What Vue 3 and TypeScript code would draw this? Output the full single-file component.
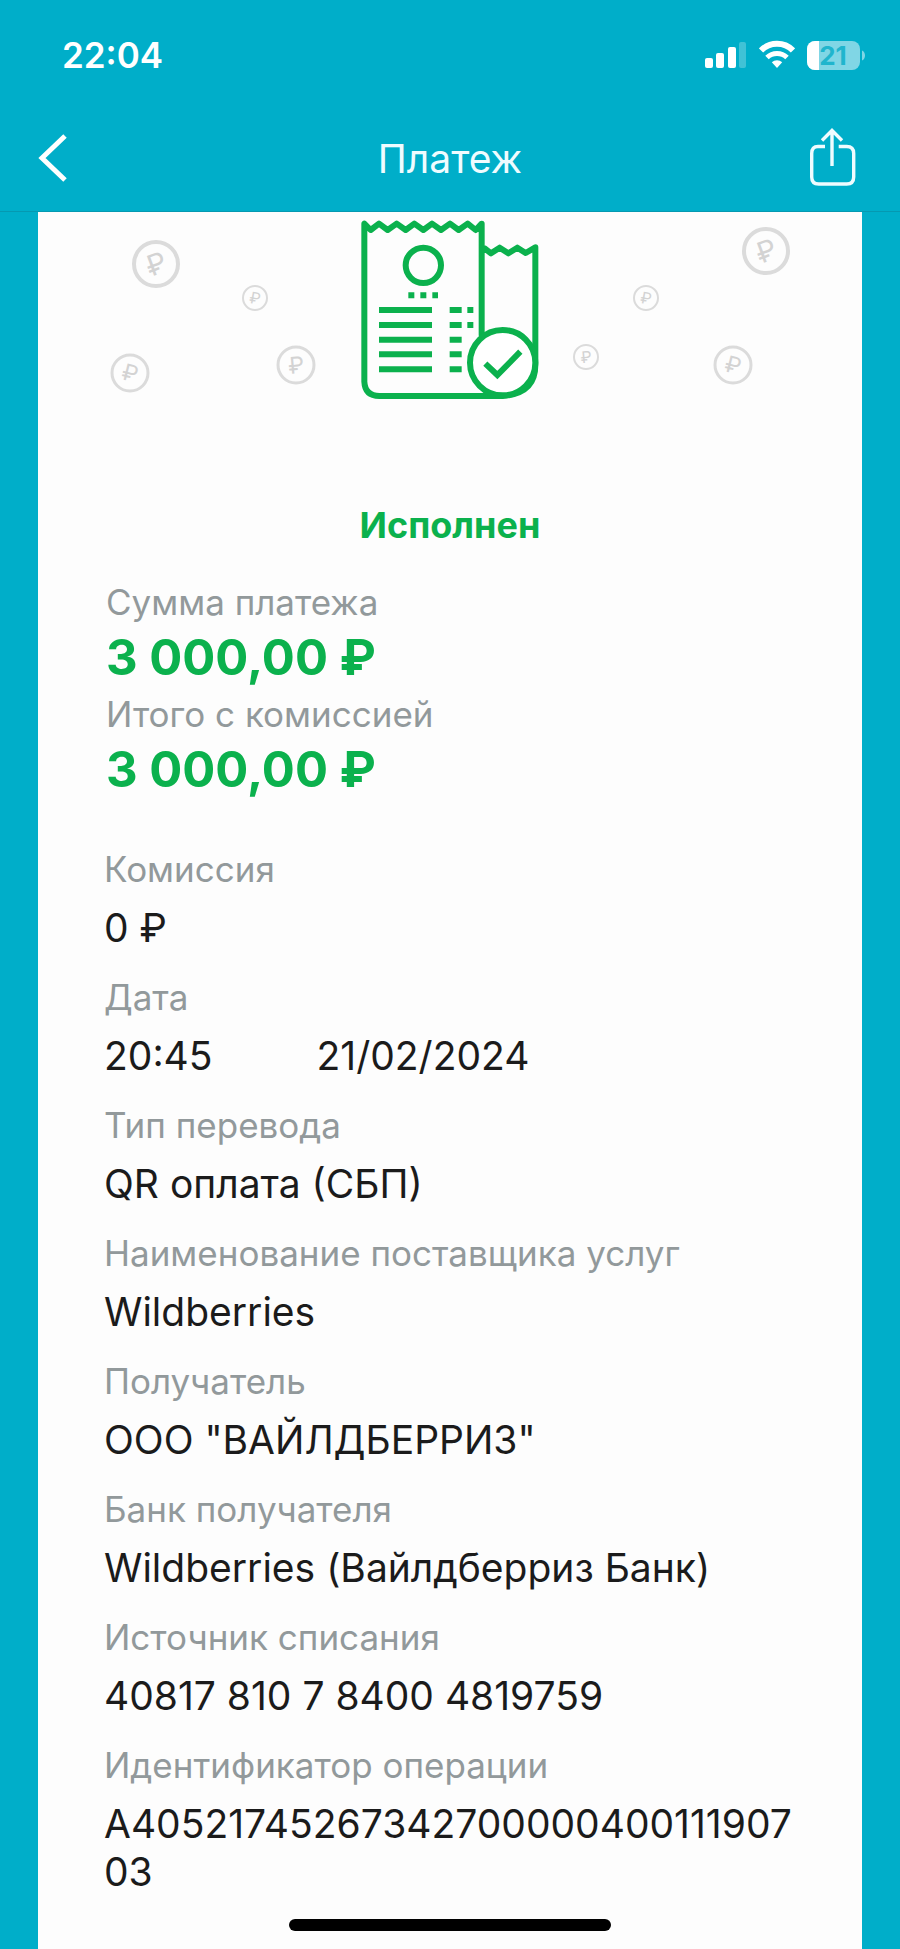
<script setup lang="ts">
interface Coin {
  x: number
  y: number
  r: number
  angle: number
  size: number
  stroke: number
}

interface Detail {
  label: string
  values: string[]
}

const coins: Coin[] = [
  { x: 156, y: 264, r: 22, angle: -20, size: 29, stroke: 4 },
  { x: 255, y: 298, r: 12, angle: 10, size: 16, stroke: 2 },
  { x: 130, y: 373, r: 18, angle: 14, size: 23, stroke: 3 },
  { x: 296, y: 365, r: 18, angle: -5, size: 23, stroke: 3 },
  { x: 766, y: 251, r: 22, angle: -20, size: 29, stroke: 4 },
  { x: 646, y: 298, r: 12, angle: 10, size: 16, stroke: 2 },
  { x: 586, y: 357, r: 12, angle: -5, size: 16, stroke: 2 },
  { x: 733, y: 365, r: 18, angle: 14, size: 23, stroke: 3 },
]

const sums = [
  { label: 'Сумма платежа', amount: '3 000,00 ₽' },
  { label: 'Итого с комиссией', amount: '3 000,00 ₽' },
]

const details: Detail[] = [
  { label: 'Комиссия', values: ['0 ₽'] },
  { label: 'Дата', values: ['20:45', '21/02/2024'] },
  { label: 'Тип перевода', values: ['QR оплата (СБП)'] },
  { label: 'Наименование поставщика услуг', values: ['Wildberries'] },
  { label: 'Получатель', values: ['ООО "ВАЙЛДБЕРРИЗ"'] },
  { label: 'Банк получателя', values: ['Wildberries (Вайлдберриз Банк)'] },
  { label: 'Источник списания', values: ['40817 810 7 8400 4819759'] },
  { label: 'Идентификатор операции', values: ['A4052174526734270000040011190703'] },
]
</script>

<template>
  <div class="screen">
    <div class="status-bar">
      <time class="clock">22:04</time>
      <div class="indicators">
        <svg width="42" height="30" viewBox="0 0 42 30" aria-hidden="true">
          <g fill="#fff">
            <rect x="0" y="18" width="8" height="10" rx="2" />
            <rect x="11" y="13" width="8" height="15" rx="2" />
            <rect x="23" y="7" width="8" height="21" rx="2" />
            <rect x="34" y="2" width="7" height="26" rx="2" opacity=".25" />
          </g>
        </svg>
        <svg width="36" height="30" viewBox="0 0 36 30" aria-hidden="true">
          <path d="M2 10.500a22.500 22.500 0 0 1 32 0" fill="none" stroke="#fff" stroke-width="6" />
          <path d="M8 17.500a14.500 14.500 0 0 1 20 0" fill="none" stroke="#fff" stroke-width="5" />
          <path d="M12.800 22.300a7.600 7.600 0 0 1 10.400 0L18 28z" fill="#fff" />
        </svg>
        <svg width="59" height="30" viewBox="0 0 59 30" role="img" aria-label="Заряд 21%">
          <clipPath id="battery-shape"><rect x="0" y="1" width="53" height="29" rx="8" /></clipPath>
          <g clip-path="url(#battery-shape)">
            <rect y="1" width="53" height="29" fill="#80d6e5" />
            <rect y="1" width="12" height="29" fill="#fff" />
          </g>
          <path d="M55 10.500c4 1.500 4 8.500 0 10z" fill="#80d6e5" />
          <text x="26" y="25" text-anchor="middle" class="charge">21</text>
        </svg>
      </div>
    </div>

    <header class="nav">
      <button type="button" class="nav-button" aria-label="Назад">
        <svg width="29" height="50" viewBox="0 0 29 50">
          <path d="M27 3 4 25l23 22" fill="none" stroke="#fff" stroke-width="5" />
        </svg>
      </button>
      <h1>Платеж</h1>
      <button type="button" class="nav-button" aria-label="Поделиться">
        <svg width="52" height="60" viewBox="0 0 52 60">
          <g fill="none" stroke="#effcff" stroke-width="3.400">
            <path d="M15 18.500H8Q1.700 18.500 1.700 25.500V49q0 7 7 7h28q7 0 7-7V25.500q0-7-7-7h-8" />
            <path d="M22 38V3.500M12 12.500 22 2.500l10 10" />
          </g>
        </svg>
      </button>
    </header>

    <main class="receipt">
      <svg class="illustration" viewBox="38 212 824 240" aria-hidden="true">
        <g v-for="(coin, i) in coins" :key="i" :transform="`translate(${coin.x} ${coin.y})`">
          <circle :r="coin.r" fill="none" stroke="#dbdbdb" :stroke-width="coin.stroke" />
          <text
            class="coin-sign"
            text-anchor="middle"
            :font-size="coin.size"
            :y="coin.size * 0.36"
            :transform="`rotate(${coin.angle})`"
          >₽</text>
        </g>
        <svg x="340" y="205" width="220" height="210" viewBox="0 0 660 630">
          <g fill="none" stroke="#0bb14d" stroke-width="18">
            <path
              stroke-linejoin="round"
              stroke-linecap="round"
              d="M425 390V56L407 75 383 56 356 75 330 56 303 75 276 56 250 75 223 56 197 75 170 56 143 75 117 56 92 75 73 56V530Q75 573 118 573H488Q586 565 586 480V127L557 144 532 128 505 145 479 128 453 145 434 130"
            />
            <circle cx="250" cy="181" r="53" />
            <circle cx="488" cy="473" r="98" fill="#fff" />
            <path d="M436 476l36 34 69-70" />
            <path d="M205 271h89" stroke-dasharray="18 18" />
            <path d="M117 315h159M117 360h159M117 404h159M117 448h159M117 493h159" />
            <path d="M329 315h36M382 315h18M329 360h36M382 360h18M329 404h36M329 448h36M329 493h36" />
          </g>
        </svg>
      </svg>

      <p class="state">Исполнен</p>

      <dl class="sums">
        <div v-for="sum in sums" :key="sum.label" class="sum">
          <dt>{{ sum.label }}</dt>
          <dd>{{ sum.amount }}</dd>
        </div>
      </dl>

      <dl class="details">
        <div v-for="item in details" :key="item.label" class="detail">
          <dt>{{ item.label }}</dt>
          <dd>
            <span v-for="value in item.values" :key="value">{{ value }}</span>
          </dd>
        </div>
      </dl>
    </main>

    <div class="home-indicator"></div>
  </div>
</template>

<style>
body {
  margin: 0;
  background: #00aec9;
}
</style>

<style scoped>
.screen {
  position: relative;
  display: flex;
  flex-direction: column;
  min-height: 100vh;
  background: #00aec9;
  font-family: Inter, "Liberation Sans", sans-serif;
}

.status-bar {
  display: flex;
  align-items: center;
  justify-content: space-between;
  height: 110px;
  padding: 0 34px 0 62px;
  color: #fff;
}

.clock {
  font-size: 35px;
  font-weight: 600;
}

.indicators {
  display: flex;
  gap: 12px;
}

.charge {
  font-size: 26px;
  font-weight: 700;
  fill: #20b5cd;
}

.nav {
  display: grid;
  grid-template-columns: 1fr auto 1fr;
  align-items: center;
  height: 96px;
  padding: 0 38px 5px;
  border-bottom: 1px solid #0599b1;
}

.nav-button {
  display: flex;
  padding: 0;
  border: 0;
  background: none;
  cursor: pointer;
}

.nav-button:last-child {
  justify-self: end;
}

h1 {
  margin: 0;
  color: #effcff;
  font-size: 39px;
  font-weight: 400;
}

.receipt {
  flex: 1;
  margin: 0 38px;
  padding-bottom: 54px;
  background: #fdfdfd;
}

.illustration {
  display: block;
  width: 100%;
}

.coin-sign {
  fill: #d3d3d3;
}

.state {
  margin: 49px 0 0;
  color: #0bb14d;
  font-size: 36px;
  font-weight: 700;
  line-height: 48px;
  text-align: center;
}

dl,
dd {
  margin: 0;
}

dt {
  color: #92999b;
  font-size: 35px;
  line-height: 48px;
}

.sums {
  display: flex;
  flex-direction: column;
  padding: 29px 68px 0;
}

.sum dd {
  color: #0bb14d;
  font-size: 49px;
  font-weight: 700;
  line-height: 64px;
}

.details {
  display: flex;
  flex-direction: column;
  gap: 21px;
  padding: 43px 48px 0 66px;
}

.detail {
  display: flex;
  flex-direction: column;
  gap: 11px;
}

.detail dd {
  display: flex;
  gap: 104px;
  color: #1b1b1b;
  font-size: 39px;
  line-height: 48px;
}

.detail span {
  min-width: 0;
  overflow-wrap: anywhere;
}

.home-indicator {
  position: absolute;
  bottom: 19px;
  left: 50%;
  width: 322px;
  height: 12px;
  border-radius: 6px;
  background: #000;
  transform: translateX(-50%);
}
</style>
